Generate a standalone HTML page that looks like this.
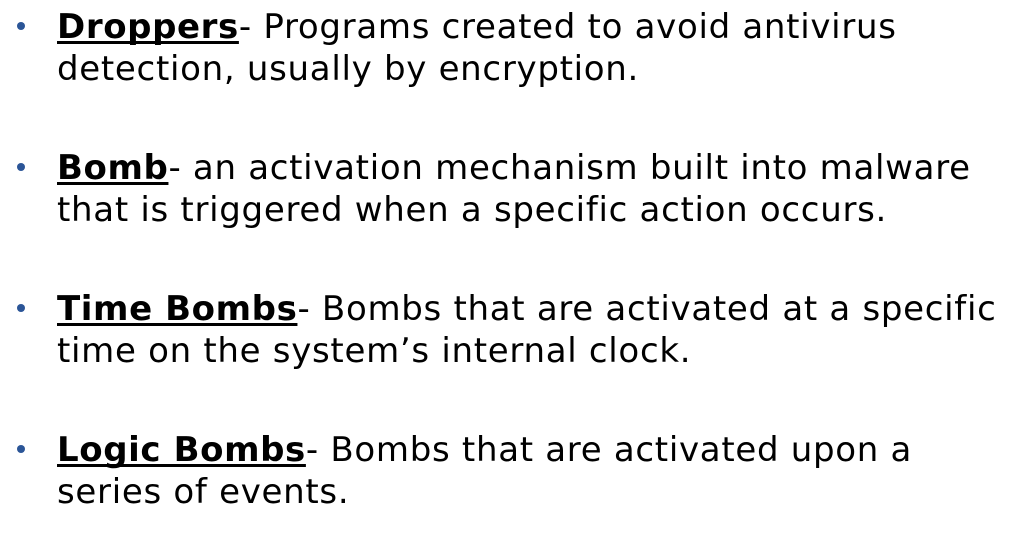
<!DOCTYPE html>
<html><head><style>
body{margin:0;width:1027px;height:548px;background:#fff;overflow:hidden;font-family:"DejaVu Sans","Liberation Sans",sans-serif;color:#000}
.b{position:absolute;left:57px;width:970px;font-size:34px;letter-spacing:0.7px;line-height:42px;white-space:nowrap}
.b b{text-decoration:underline;text-decoration-thickness:3px;text-underline-offset:3px;text-decoration-skip-ink:none;letter-spacing:0.6px}
.d{position:absolute;left:17px;width:8px;height:8px;border-radius:50%;background:#2b5597}
</style></head><body>
<div class="d" style="top:22px"></div>
<div class="b" style="top:6px"><b>Droppers</b>- Programs created to avoid antivirus<br>detection, usually by encryption.</div>
<div class="d" style="top:163px"></div>
<div class="b" style="top:147px"><b>Bomb</b>- an activation mechanism built into malware<br>that is triggered when a specific action occurs.</div>
<div class="d" style="top:304px"></div>
<div class="b" style="top:288px"><b>Time Bombs</b>- Bombs that are activated at a specific<br>time on the system’s internal clock.</div>
<div class="d" style="top:445px"></div>
<div class="b" style="top:429px"><b>Logic Bombs</b>- Bombs that are activated upon a<br>series of events.</div>
</body></html>
